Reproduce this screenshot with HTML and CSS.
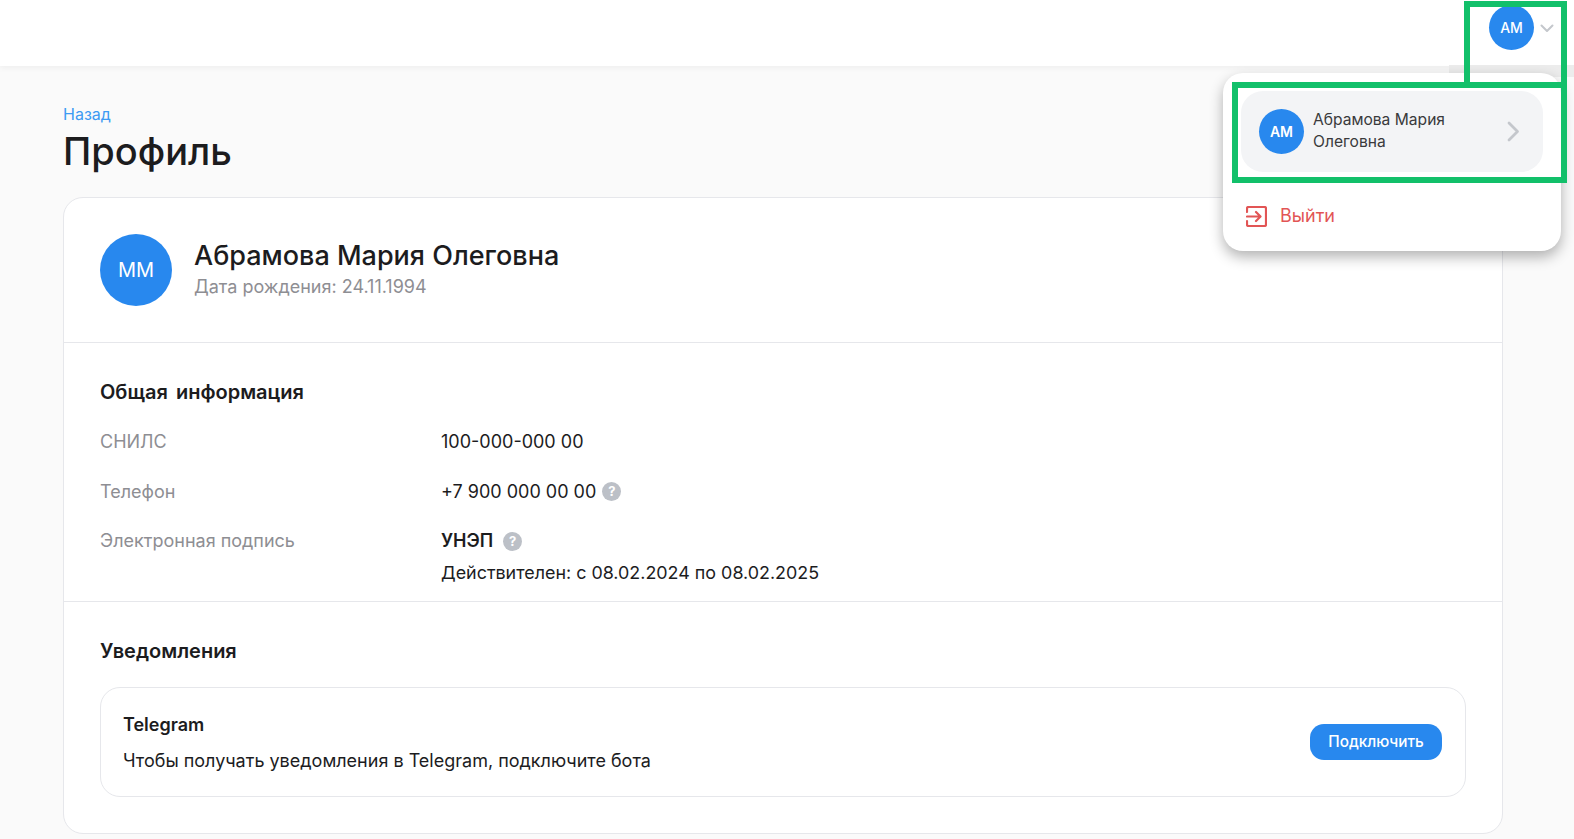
FILE: index.html
```html
<!DOCTYPE html>
<html lang="ru">
<head>
<meta charset="utf-8">
<title>Профиль</title>
<link rel="stylesheet" href="styles.css">
</head>
<body>
<header class="topbar">
  <div class="user-toggle">
    <span class="avatar avatar-small">АМ</span>
    <svg class="toggle-chevron" width="14" height="9" viewBox="0 0 14 9" fill="none"><path d="M1.500 1.500 7 7l5.500-5.500" stroke="#c4c7cc" stroke-width="2" stroke-linecap="round" stroke-linejoin="round"/></svg>
  </div>
</header>
<main class="page">
  <a class="back" href="#">Назад</a>
  <h1 class="title">Профиль</h1>
  <section class="card">
    <div class="person">
      <span class="avatar avatar-large">ММ</span>
      <div class="person-text">
        <div class="person-name">Абрамова Мария Олеговна</div>
        <div class="person-birth">Дата рождения: 24.11.1994</div>
      </div>
    </div>
    <div class="info">
      <h2 class="section-title">Общая информация</h2>
      <div class="rows">
        <div class="row"><div class="label">СНИЛС</div><div class="value">100-000-000 00</div></div>
        <div class="row row-phone"><div class="label">Телефон</div><div class="value value-help">+7 900 000 00 00 <span class="help">?</span></div></div>
        <div class="row row-sign"><div class="label">Электронная подпись</div><div class="value"><div class="sign-type"><strong>УНЭП</strong><span class="help">?</span></div><div class="sign-date">Действителен: с 08.02.2024 по 08.02.2025</div></div></div>
      </div>
    </div>
    <div class="notify">
      <h2 class="section-title">Уведомления</h2>
      <div class="telegram">
        <div class="telegram-body">
          <div class="telegram-title">Telegram</div>
          <div class="telegram-text">Чтобы получать уведомления в Telegram, подключите бота</div>
        </div>
        <button class="connect" type="button">Подключить</button>
      </div>
    </div>
  </section>
</main>
<div class="menu-shade"></div>
<div class="menu">
  <div class="menu-user">
    <span class="avatar avatar-small avatar-bold">АМ</span>
    <span class="menu-name">Абрамова Мария Олеговна</span>
    <svg class="menu-chevron" width="13" height="21" viewBox="0 0 13 21" fill="none"><path d="M2 2l8.500 8.500L2 19" stroke="#c4c7cc" stroke-width="2.800" stroke-linecap="round" stroke-linejoin="round"/></svg>
  </div>
  <div class="menu-logout">
    <svg width="21" height="21" viewBox="0 0 21 21" fill="none"><path d="M1 6V2.500A1.500 1.500 0 0 1 2.500 1h16A1.500 1.500 0 0 1 20 2.500v16a1.500 1.500 0 0 1-1.500 1.500h-16A1.500 1.500 0 0 1 1 18.500V15M1 10.500h13M10 6l4.500 4.500L10 15" stroke="#e25555" stroke-width="2.200" stroke-linecap="round" stroke-linejoin="round"/></svg>
    <span>Выйти</span>
  </div>
</div>
<div class="mark mark-toggle"></div>
<div class="mark mark-user"></div>
</body>
</html>
```
FILE: styles.css
```css
* { box-sizing: border-box; }
html, body { margin: 0; height: 839px; overflow: hidden; }
body { background: #fafafa; font-family: Inter, "Noto Sans", sans-serif; color: #1c1c1e; position: relative; }

.topbar { height: 66px; background: #fff; display: flex; justify-content: flex-end; padding: 5px 18px 0 0; box-shadow: 0 2px 6px rgba(0, 0, 0, .05); }
.user-toggle { display: flex; align-items: flex-start; gap: 6px; padding-right: 2px; }
.toggle-chevron { margin-top: 19px; }

.avatar { display: flex; align-items: center; justify-content: center; flex: none; border-radius: 50%; background: #2888ee; color: #fff; }
.avatar-small { width: 45px; height: 45px; font-size: 14px; font-weight: 500; }
.avatar-bold { font-weight: 600; }
.avatar-large { width: 72px; height: 72px; font-size: 20px; }

.page { padding: 39px 71px 0 63px; }
.back { display: block; font-size: 16px; line-height: 18px; color: #3d9bf3; text-decoration: none; }
.title { margin: 6px 0 24px; font-size: 38px; line-height: 44px; font-weight: 500; }

.card { height: 637px; background: #fff; border: 1px solid #e6e7eb; border-radius: 20px; }
.person { height: 145px; padding: 36px 36px 0; display: flex; gap: 22px; border-bottom: 1px solid #e6e7eb; }
.person-text { padding-top: 4px; }
.person-name { font-size: 27px; line-height: 36px; font-weight: 500; }
.person-birth { margin-top: 2px; font-size: 18px; line-height: 22px; color: #8e8e93; }

.info { height: 259px; padding: 35px 36px 0; border-bottom: 1px solid #e6e7eb; }
.section-title { margin: 0; font-size: 20px; line-height: 28px; font-weight: 600; word-spacing: 3px; }
.rows { margin-top: 22px; }
.row { display: flex; height: 50px; font-size: 18px; line-height: 28px; }
.row-phone { height: 49px; }
.row-sign { height: auto; }
.label { width: 341px; color: #8e8e93; }
.value-help { display: flex; align-items: flex-start; gap: 6px; }
.sign-type { display: flex; align-items: center; gap: 10px; }
.sign-type strong { font-weight: 600; }
.sign-date { margin-top: 4px; font-size: 17.900px; }
.help { display: inline-flex; align-items: center; justify-content: center; width: 19px; height: 19px; margin-top: 4px; border-radius: 50%; background: #bcc0c7; color: #fff; font-size: 13px; line-height: 1; font-weight: 700; }
.sign-type .help { margin-top: 0; }

.notify { padding: 35px 36px 0; }
.telegram { height: 110px; margin-top: 22px; padding: 0 23px 0 22px; display: flex; align-items: center; justify-content: space-between; border: 1px solid #e6e7eb; border-radius: 20px; }
.telegram-body { padding-top: 2px; }
.telegram-title { font-size: 18px; line-height: 26px; font-weight: 600; }
.telegram-text { margin-top: 10px; font-size: 18px; line-height: 26px; }
.connect { width: 132px; height: 36px; padding: 0 0 1px; border: 0; border-radius: 14px; background: #2888ee; color: #fff; font: 500 15.300px Inter, sans-serif; }

.menu-shade { position: absolute; left: 1449px; top: 65px; width: 125px; height: 12px; background: #ececec; }
.menu { position: absolute; left: 1223px; top: 73px; width: 338px; height: 178px; padding: 18px 18px 0; background: #fff; border-radius: 20px; box-shadow: 0 6px 14px rgba(0, 0, 0, .3); }
.menu-user { height: 81px; padding: 0 18px; display: flex; align-items: center; gap: 9px; background: #f3f4f6; border-radius: 22px; }
.menu-name { width: 175px; margin-bottom: 2px; font-size: 15.600px; line-height: 22px; color: #3a3a3c; }
.menu-chevron { margin-left: 10px; }
.menu-logout { display: flex; align-items: center; gap: 13px; margin: 33px 0 0 5px; font-size: 18px; line-height: 22px; color: #e25555; }

.mark { position: absolute; border: 6px solid #12c06a; }
.mark-toggle { left: 1464px; top: 1px; width: 103px; height: 87px; }
.mark-user { left: 1232px; top: 82px; width: 335px; height: 101px; }
```
